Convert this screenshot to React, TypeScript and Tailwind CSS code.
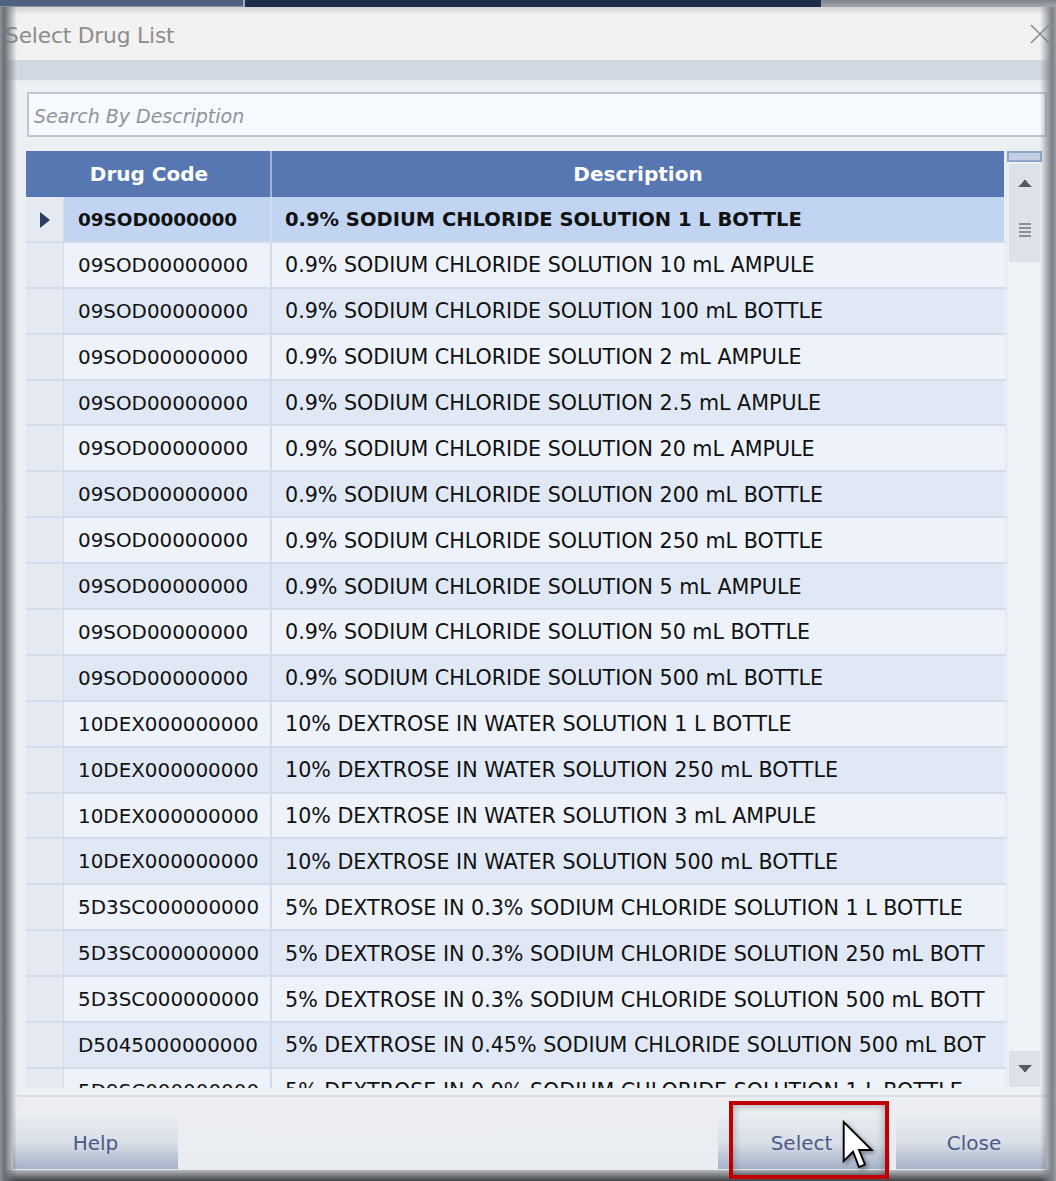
import React from 'react';

const ROWS: [string, string][] = [
  ['09SOD0000000', '0.9% SODIUM CHLORIDE SOLUTION 1 L BOTTLE'],
  ['09SOD00000000', '0.9% SODIUM CHLORIDE SOLUTION 10 mL AMPULE'],
  ['09SOD00000000', '0.9% SODIUM CHLORIDE SOLUTION 100 mL BOTTLE'],
  ['09SOD00000000', '0.9% SODIUM CHLORIDE SOLUTION 2 mL AMPULE'],
  ['09SOD00000000', '0.9% SODIUM CHLORIDE SOLUTION 2.5 mL AMPULE'],
  ['09SOD00000000', '0.9% SODIUM CHLORIDE SOLUTION 20 mL AMPULE'],
  ['09SOD00000000', '0.9% SODIUM CHLORIDE SOLUTION 200 mL BOTTLE'],
  ['09SOD00000000', '0.9% SODIUM CHLORIDE SOLUTION 250 mL BOTTLE'],
  ['09SOD00000000', '0.9% SODIUM CHLORIDE SOLUTION 5 mL AMPULE'],
  ['09SOD00000000', '0.9% SODIUM CHLORIDE SOLUTION 50 mL BOTTLE'],
  ['09SOD00000000', '0.9% SODIUM CHLORIDE SOLUTION 500 mL BOTTLE'],
  ['10DEX000000000', '10% DEXTROSE IN WATER SOLUTION 1 L BOTTLE'],
  ['10DEX000000000', '10% DEXTROSE IN WATER SOLUTION 250 mL BOTTLE'],
  ['10DEX000000000', '10% DEXTROSE IN WATER SOLUTION 3 mL AMPULE'],
  ['10DEX000000000', '10% DEXTROSE IN WATER SOLUTION 500 mL BOTTLE'],
  ['5D3SC000000000', '5% DEXTROSE IN 0.3% SODIUM CHLORIDE SOLUTION 1 L BOTTLE'],
  ['5D3SC000000000', '5% DEXTROSE IN 0.3% SODIUM CHLORIDE SOLUTION 250 mL BOTT'],
  ['5D3SC000000000', '5% DEXTROSE IN 0.3% SODIUM CHLORIDE SOLUTION 500 mL BOTT'],
  ['D5045000000000', '5% DEXTROSE IN 0.45% SODIUM CHLORIDE SOLUTION 500 mL BOT'],
  ['5D9SC000000000', '5% DEXTROSE IN 0.9% SODIUM CHLORIDE SOLUTION 1 L BOTTLE'],
];

const FONT = "font-['DejaVu_Sans',sans-serif]";

const FooterButton: React.FC<{ label: string; className?: string }> = ({ label, className }) => (
  <div
    className={`h-[52px] flex items-center justify-center text-[20px] text-[#4b5a86] bg-gradient-to-b from-[#e8ebf0] via-[#d9dfe8] to-[#a6b2c9] ${className || ''}`}
  >
    {label}
  </div>
);

export default function App() {
  return (
    <div className={`relative w-[1056px] h-[1181px] overflow-hidden bg-[#eceef2] flex flex-col ${FONT}`}>
      {/* taskbar strip above the window */}
      <div className="h-[7px] flex shrink-0">
        <div className="w-[243px] bg-[#4d6283] border-b border-[#8d949e]" />
        <div className="w-[2px] bg-[#a9adb3]" />
        <div className="w-[576px] bg-[#1e2d4a]" />
        <div className="flex-1 bg-gradient-to-b from-[#7f848c] to-[#a3a7ad]" />
      </div>

      {/* title bar */}
      <div className="h-[53px] shrink-0 bg-gradient-to-b from-[#d2d2d2] via-[#f2f2f2] via-15% to-[#f2f2f2] flex items-center justify-between pl-[5px] pr-[5px] pt-[6px]">
        <span className="text-[21.8px] text-[#8d8d8d] tracking-[-0.2px]">Select Drug List</span>
        <svg width="22" height="22" viewBox="0 0 22 22" className="mt-[-5px]">
          <path d="M2 2 L20 20 M20 2 L2 20" stroke="#8a8a8a" strokeWidth="1.6" />
        </svg>
      </div>

      {/* blue strip */}
      <div className="h-[20px] shrink-0 bg-[#d3d9e2]" />

      {/* content panel */}
      <div className="ml-[17px] mr-[6px] h-[1017px] shrink-0 bg-[#ecf0f3] border-t-2 border-[#e6ebf0] border-b-2 border-b-[#d9dee6] pt-[10px] pl-[9px] pr-[4px] flex flex-col">
        <div className="ml-[1px] mr-[-1px] h-[45px] border-2 border-[#bcc5d7] bg-[#f6f9fe] flex items-center pl-[5px] pt-[3px]">
          <span className="italic text-[19px] text-[#8f949c]">Search By Description</span>
        </div>

        {/* grid */}
        <div className="mt-[14px] h-[937px] flex">
          <div className="w-[980px] flex flex-col overflow-hidden">
            <div className="h-[46px] shrink-0 flex bg-[#5677b1] text-white font-bold text-[20px]">
              <div className="w-[244px] flex items-center justify-center pl-[2px]">Drug Code</div>
              <div className="w-[2px] bg-[#9db2d6]" />
              <div className="w-[732px] flex items-center justify-center">Description</div>
              <div className="w-[2px] bg-[#ecf0f3]" />
            </div>
            {ROWS.map(([code, desc], i) => {
              const sel = i === 0;
              const bg = sel ? 'bg-[#c1d5f2]' : i % 2 === 1 ? 'bg-[#edf2fb]' : 'bg-[#e0e8f6]';
              return (
                <div key={i} className="h-[45.9px] shrink-0 flex border-b-2 border-[#d2dcec]">
                  <div className="w-[38px] bg-[#e5eaf2] border-r border-[#d5dce7] flex items-center justify-center pt-[2px]">
                    {sel && (
                      <svg width="10" height="16" viewBox="0 0 10 16">
                        <path d="M0 0 L10 8 L0 16 Z" fill="#2d3f66" />
                      </svg>
                    )}
                  </div>
                  <div
                    className={`w-[206px] ${bg} flex items-center pl-[14px] pt-[2px] text-[#111] whitespace-nowrap overflow-hidden ${
                      sel ? 'font-bold text-[18.5px] tracking-[-0.1px]' : 'text-[19.9px]'
                    }`}
                  >
                    {code}
                  </div>
                  <div className="w-[2px] bg-[#d2dcec]" />
                  <div
                    className={`w-[732px] ${bg} flex items-center pl-[13px] pt-[2px] text-[#111] whitespace-nowrap overflow-hidden ${
                      sel ? 'font-bold text-[19.5px]' : 'text-[20.65px]'
                    }`}
                  >
                    {desc}
                  </div>
                  <div className="w-[2px] bg-[#ecf0f3]" />
                </div>
              );
            })}
          </div>

          {/* scrollbar */}
          <div className="w-[36px] flex flex-col bg-[#eef1f5] border-l border-[#dfe4ec]">
            <div className="h-[11px] shrink-0 border-2 border-[#8ea4c9] bg-[#c2cee2]" />
            <div className="mx-[2px] mt-[2px] h-[98px] shrink-0 bg-[#dde2ea] flex flex-col items-center">
              <svg width="14" height="8" viewBox="0 0 14 8" className="mt-[15px]">
                <path d="M0 8 L5 3 L5 2 L6 2 L6 1 L8 1 L8 2 L9 2 L9 3 L14 8 Z" fill="#555b63" />
              </svg>
              <div className="mt-[36px] flex flex-col gap-[2px]">
                <div className="w-[12px] h-[2px] bg-[#8a8f97]" />
                <div className="w-[12px] h-[2px] bg-[#8a8f97]" />
                <div className="w-[12px] h-[2px] bg-[#8a8f97]" />
                <div className="w-[12px] h-[2px] bg-[#8a8f97]" />
              </div>
            </div>
            <div className="flex-1" />
            <div className="mx-[2px] mb-[1px] h-[36px] shrink-0 bg-[#dde2ea] flex items-center justify-center">
              <svg width="14" height="8" viewBox="0 0 14 8">
                <path d="M0 0 L14 0 L9 5 L9 6 L8 6 L8 7 L6 7 L6 6 L5 6 L5 5 Z" fill="#555b63" />
              </svg>
            </div>
          </div>
        </div>
      </div>

      {/* footer */}
      <div className="flex-1 flex items-start pt-[20px] pl-[13px] bg-gradient-to-b from-[#eceef2] to-[#e9ecf0]">
        <FooterButton label="Help" className="w-[165px]" />
        <div className="w-[540px]" />
        <FooterButton label="Select" className="w-[172px] pr-[5px]" />
        <div className="w-[6px]" />
        <FooterButton label="Close" className="w-[150px] pl-[6px]" />
      </div>
      <div className="h-[11px] shrink-0 bg-gradient-to-b from-[#b9bbbf] to-[#3f4247]" />

      {/* window frame shadows */}
      <div className="absolute left-0 top-[7px] bottom-0 w-[17px] pointer-events-none bg-gradient-to-r from-[#8d9198] via-[#6a6f77] via-25% to-transparent" />
      <div className="absolute right-0 top-[7px] bottom-0 w-[16px] pointer-events-none bg-gradient-to-r from-transparent via-[#7d8188] via-75% to-[#9a9da3]" />

      {/* annotation box */}
      <div className="absolute left-[729px] top-[1101px] w-[160px] h-[78px] border-[4px] border-[#c00000] pointer-events-none shadow-[inset_0_0_8px_rgba(0,0,0,0.35)]" />

      {/* mouse cursor */}
      <svg
        width="34"
        height="55"
        viewBox="0 0 20 32"
        className="absolute left-[842px] top-[1120px] pointer-events-none drop-shadow-[2px_2px_2px_rgba(0,0,0,0.4)]"
      >
        <path d="M1 1 L1 24 L6.5 18.5 L10 27.5 L13.5 26 L10 17.5 L17.5 17.5 Z" fill="#ffffff" stroke="#000" strokeWidth="1.1" strokeLinejoin="miter" />
      </svg>
    </div>
  );
}
